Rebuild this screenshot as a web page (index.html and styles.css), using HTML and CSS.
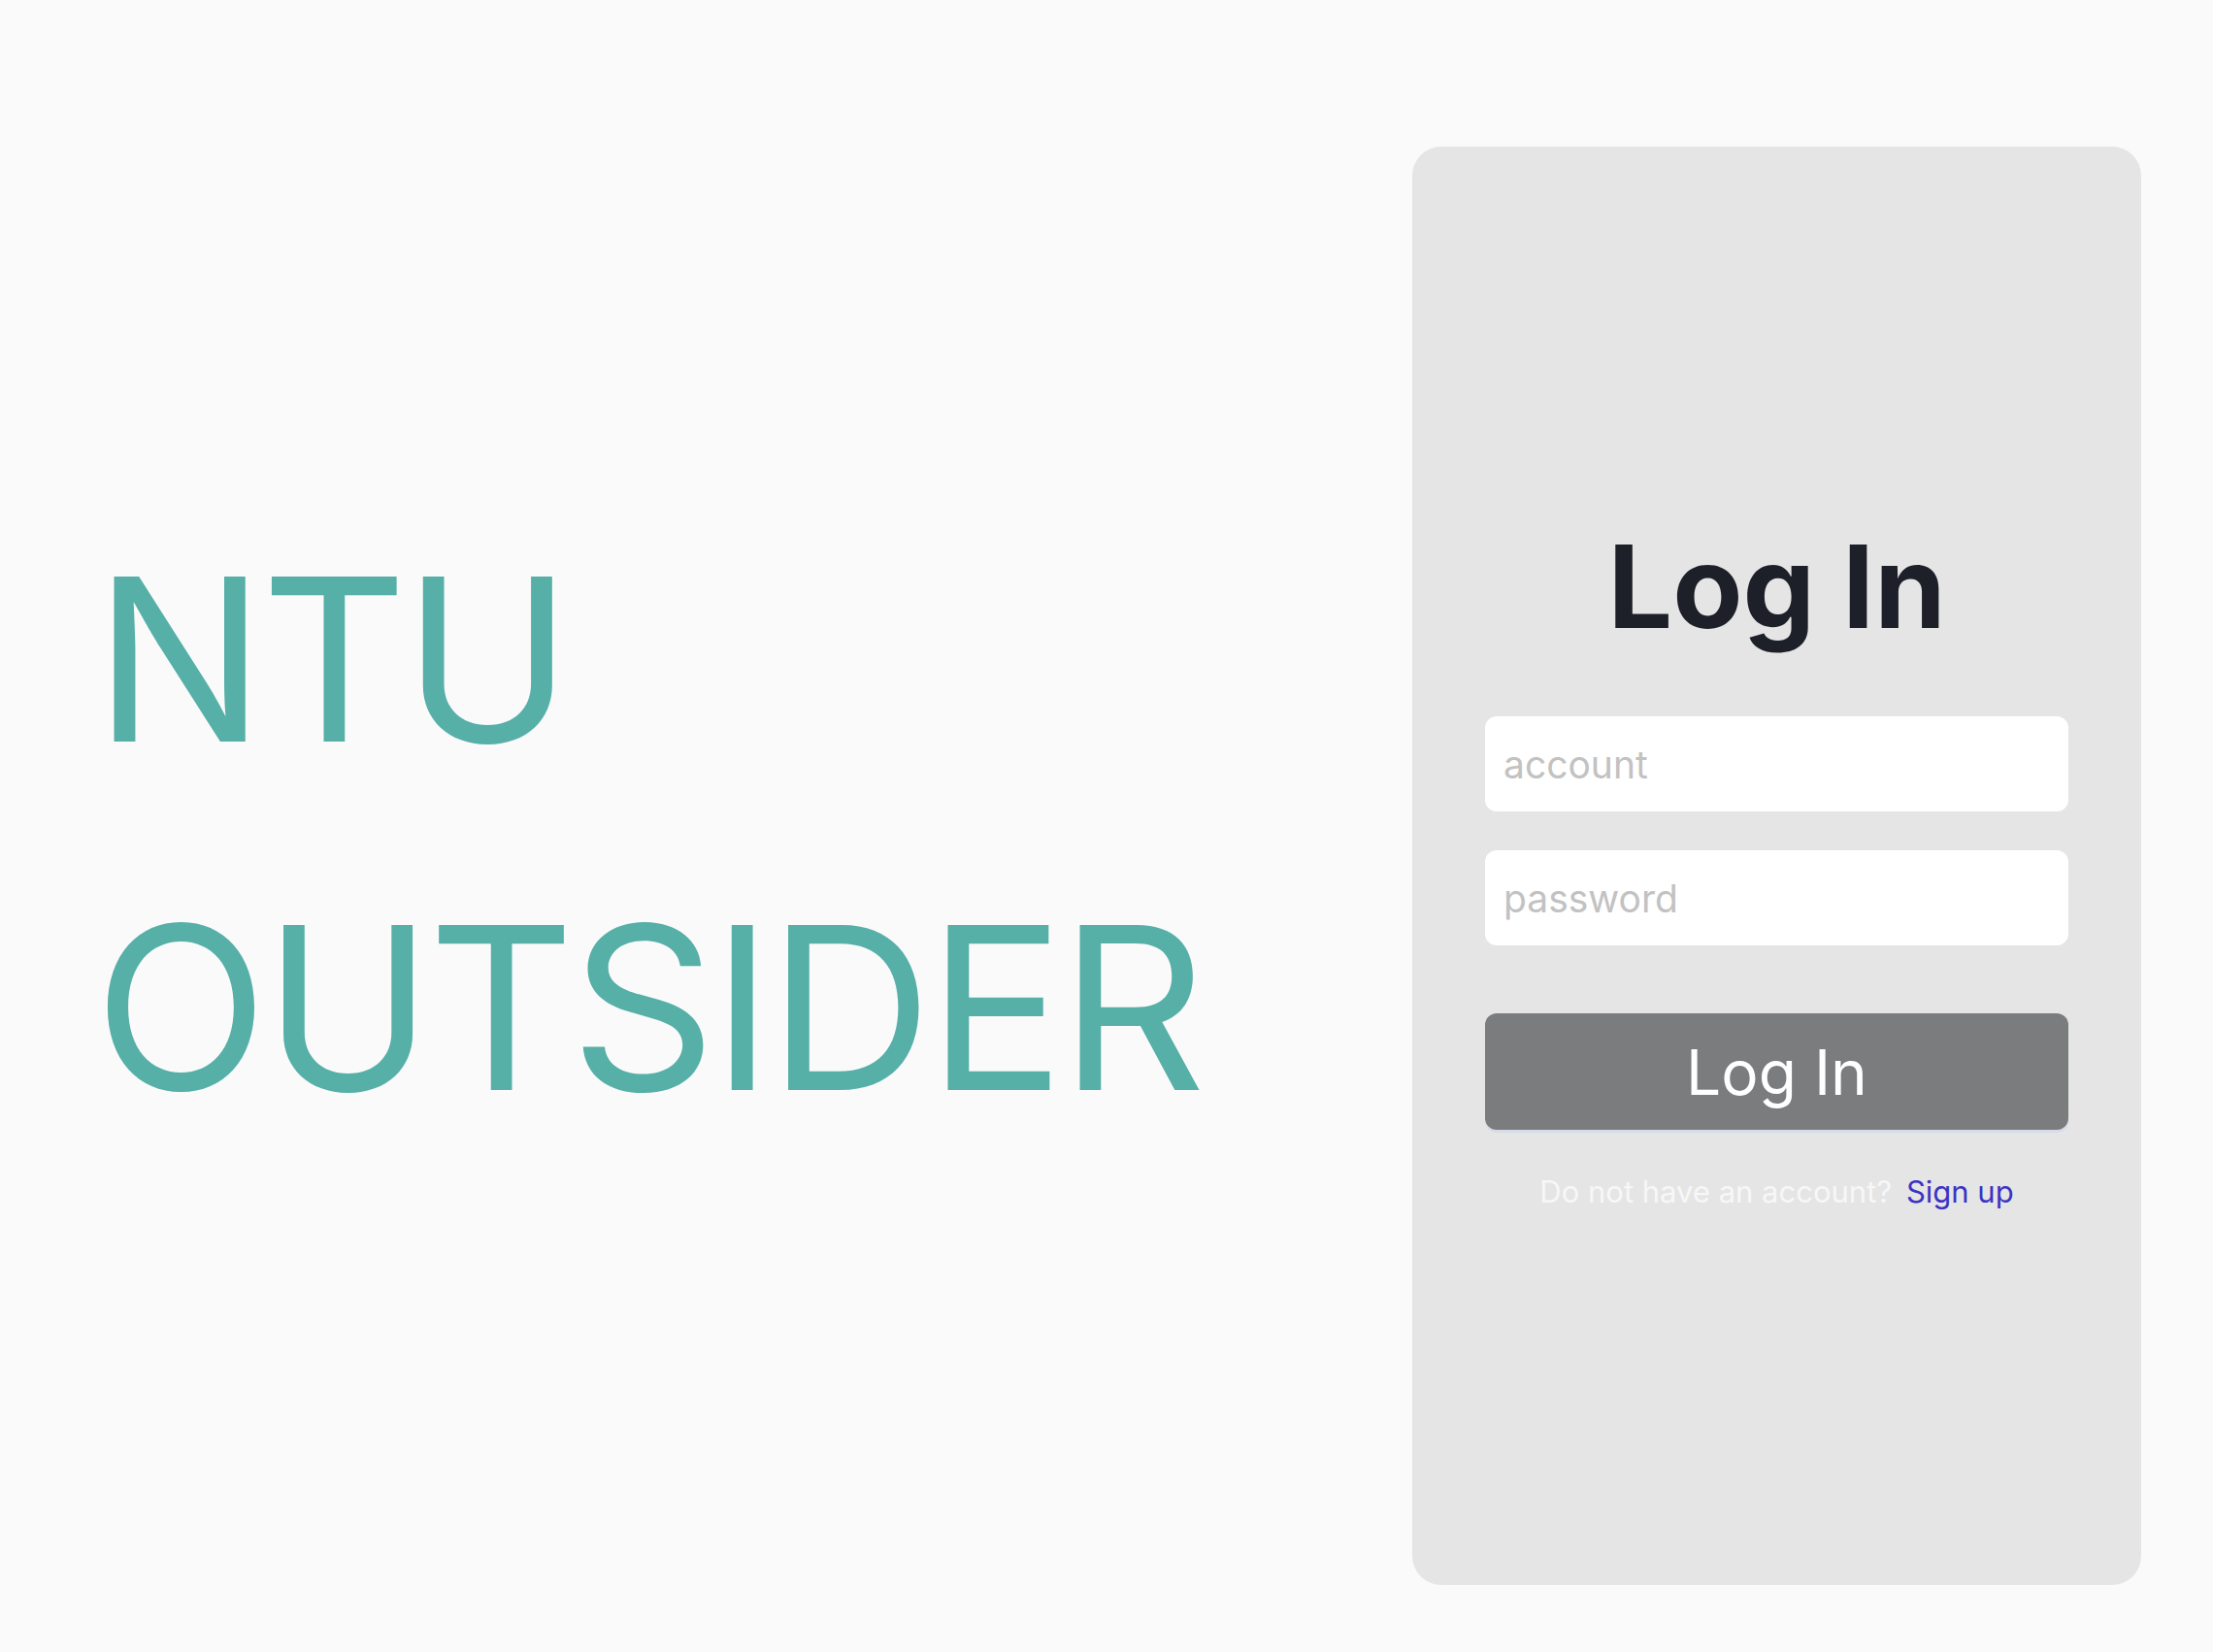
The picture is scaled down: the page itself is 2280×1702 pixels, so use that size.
FILE: index.html
```html
<!DOCTYPE html>
<html lang="en">
<head>
<meta charset="utf-8">
<title>NTU Outsider - Log In</title>
<link rel="stylesheet" href="styles.css">
</head>
<body>
<main class="page">
  <section class="brand">
    <h1 class="brand-title">NTU<br>OUTSIDER</h1>
  </section>
  <section class="card">
    <h2 class="card-title">Log In</h2>
    <form class="form">
      <input class="field" type="text" placeholder="account">
      <input class="field" type="password" placeholder="password">
      <button class="btn" type="button">Log In</button>
    </form>
    <p class="signup">Do not have an account? <a class="signup-link" href="#">Sign up</a></p>
  </section>
</main>
</body>
</html>
```
FILE: styles.css
```css
* { box-sizing: border-box; }
html, body {
  margin: 0;
  padding: 0;
  background: #fafafa;
  font-family: Inter, "Noto Sans", sans-serif;
}
.page {
  display: flex;
  justify-content: space-between;
  align-items: flex-start;
  height: 1702px;
  padding: 151px 74px 0 97px;
}
.brand {
  padding-top: 348px;
}
.brand-title {
  margin: 0;
  font-size: 234px;
  line-height: 359px;
  font-weight: 400;
  color: #56b0a8;
  letter-spacing: -4.5px;
}
.card {
  width: 751px;
  height: 1482px;
  background: #e5e5e5;
  border-radius: 30px;
  padding: 394px 75px 0;
  display: flex;
  flex-direction: column;
  align-items: stretch;
}
.card-title {
  margin: 0;
  text-align: center;
  font-size: 118px;
  line-height: 118px;
  font-weight: 700;
  color: #1d2029;
  letter-spacing: 0;
}
.form {
  margin-top: 75px;
  display: flex;
  flex-direction: column;
}
.field {
  height: 98px;
  border: none;
  border-radius: 12px;
  background: #ffffff;
  padding: 0 19px;
  font-family: Inter, sans-serif;
  font-size: 39px;
  color: #333;
  outline: none;
}
.field + .field { margin-top: 40px; }
.field::placeholder { color: #c2c2c2; }
.btn {
  margin-top: 70px;
  height: 120px;
  border: none;
  border-radius: 12px;
  background: #7b7c7e;
  color: #ffffff;
  font-family: Inter, sans-serif;
  font-size: 64px;
  font-weight: 400;
  box-shadow: 0 3px 0 #d6dce6;
  cursor: pointer;
}
.signup {
  margin: 44px 0 0;
  text-align: center;
  font-size: 31px;
  line-height: 40px;
  color: #f7f7f7;
}
.signup-link {
  margin-left: 6px;
  color: #3b33c6;
  text-decoration: none;
}
```
